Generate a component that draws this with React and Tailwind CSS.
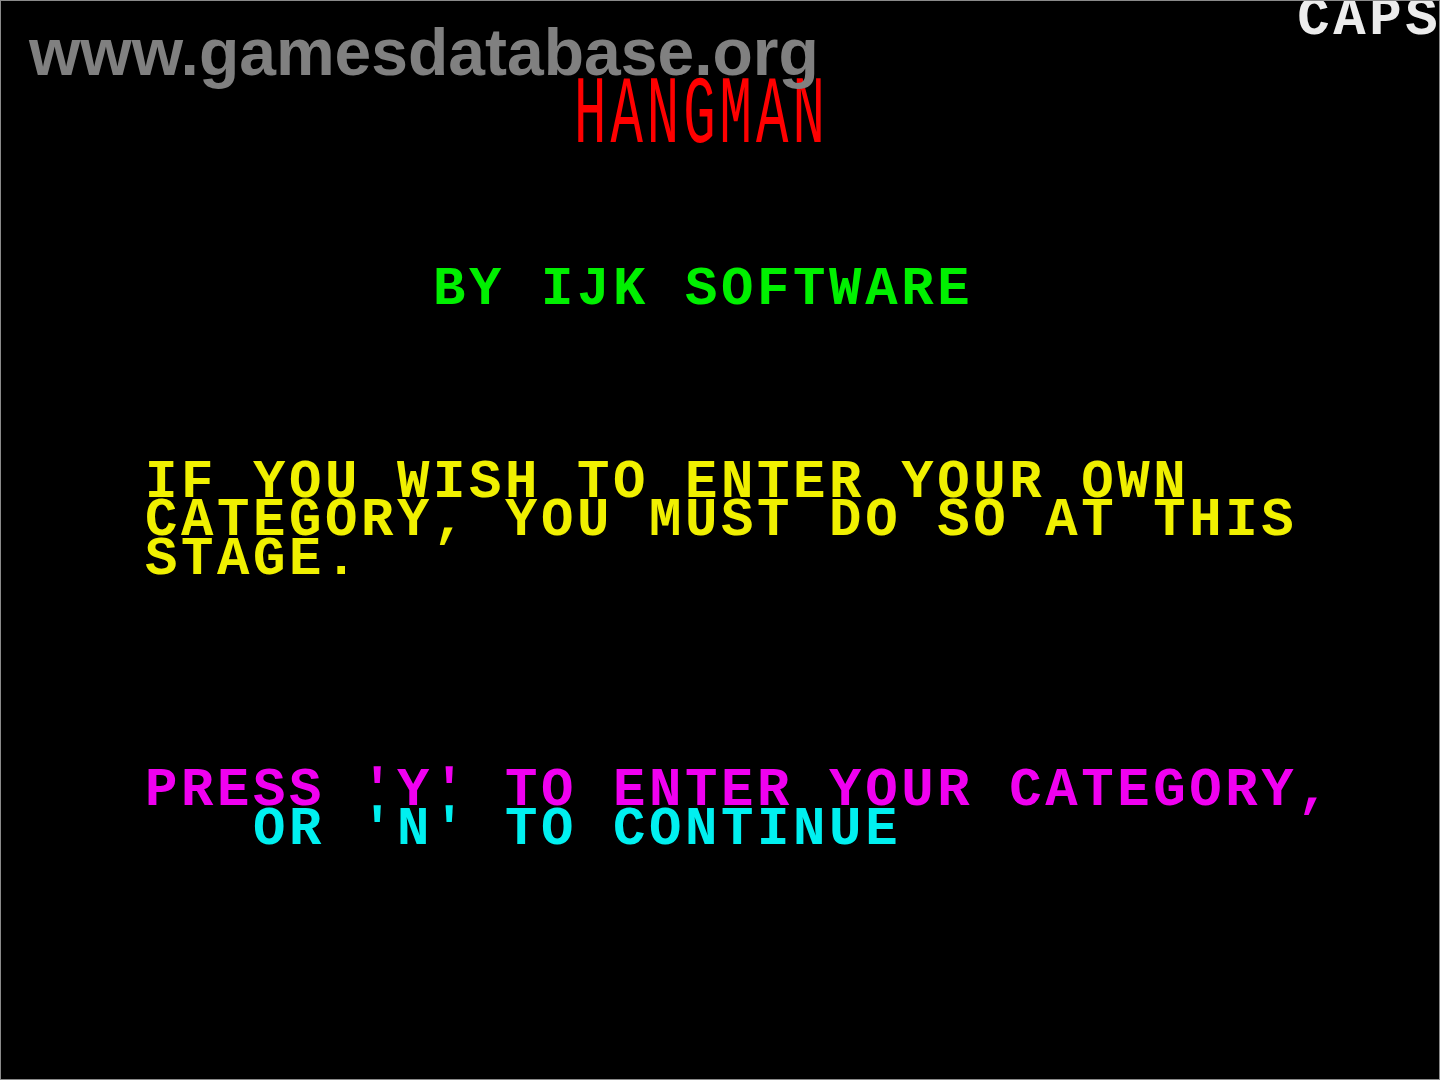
const ROW = 'h-[38.57px] leading-[38.57px]'

// 40x28 text screen; HANGMAN is a double-height line (rows 2-3)
const lines = [
  { text: '                                    CAPS', color: 'text-[#ececec]' },
  { text: '' },
  { text: '', hangman: true },
  { text: '' },
  { text: '' },
  { text: '' },
  { text: '            BY IJK SOFTWARE', color: 'text-[#00f000]' },
  { text: '' },
  { text: '' },
  { text: '' },
  { text: '' },
  { text: '    IF YOU WISH TO ENTER YOUR OWN', color: 'text-[#f0f000]' },
  { text: '    CATEGORY, YOU MUST DO SO AT THIS', color: 'text-[#f0f000]' },
  { text: '    STAGE.', color: 'text-[#f0f000]' },
  { text: '' },
  { text: '' },
  { text: '' },
  { text: '' },
  { text: '' },
  { text: "    PRESS 'Y' TO ENTER YOUR CATEGORY,", color: 'text-[#f000f0]' },
  { text: "       OR 'N' TO CONTINUE", color: 'text-[#00f0f0]' },
]

export default function App() {
  return (
    <div className="relative w-[1440px] h-[1080px] bg-black overflow-hidden border border-[#8a8a8a]">
      <div className="flex flex-col font-['Liberation_Mono',monospace] font-bold text-[54px] tracking-[3.6px] whitespace-pre blur-[0.6px]">
        {lines.map((l, i) => {
          if (l.hangman) {
            return (
              <div key={i} className="h-[77.14px] relative">
                <span className="absolute left-[573px] top-[5px] origin-top text-[#ff0000] font-normal scale-y-[1.8] leading-[38.57px] tracking-[4px]">
                  HANGMAN
                </span>
              </div>
            )
          }
          return (
            <div key={i} className={`${ROW} ${l.color || ''}`}>
              {l.text}
            </div>
          )
        })}
      </div>

      <div className="absolute left-[28px] top-[18px] font-['Liberation_Sans',Arial,sans-serif] font-bold text-[66px] leading-none text-[#808080] whitespace-nowrap">
        www.gamesdatabase.org
      </div>
    </div>
  )
}
